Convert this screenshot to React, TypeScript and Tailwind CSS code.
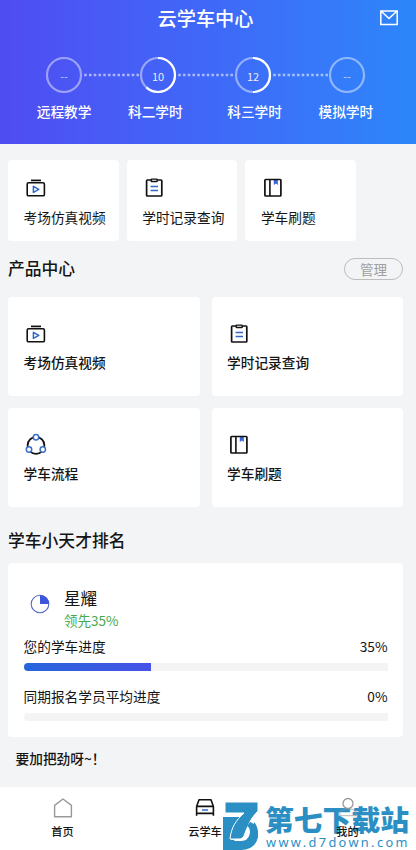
import type { ReactNode } from "react";

const steps = [
  { label: "远程教学", value: "--", progress: 0, pad: "pl-0" },
  { label: "科二学时", value: "10", progress: 62, pad: "pr-[6px]" },
  { label: "科三学时", value: "12", progress: 50, pad: "pl-[4px]" },
  { label: "模拟学时", value: "--", progress: 0, pad: "pr-[2px]" },
];

function VideoIcon() {
  return (
    <svg width="24" height="24" viewBox="0 0 24 24" fill="none">
      <path d="M7 4.4h10" stroke="#111" strokeWidth="1.7" />
      <rect x="3.2" y="6.8" width="17.2" height="13" rx="1.4" stroke="#111" strokeWidth="1.6" />
      <path d="M9.4 10.4v6l5.4-3z" stroke="#2f68c8" strokeWidth="1.5" strokeLinejoin="round" />
    </svg>
  );
}

function RecordIcon() {
  return (
    <svg width="24" height="24" viewBox="0 0 24 24" fill="none">
      <rect x="4.6" y="4" width="15.2" height="16" rx="0.8" stroke="#111" strokeWidth="1.7" />
      <rect x="9.2" y="3.1" width="6" height="2.4" rx="0.6" fill="#fff" stroke="#111" strokeWidth="1.4" />
      <path d="M8.6 10.4H16M8.6 14.6H16" stroke="#2f68c8" strokeWidth="1.5" />
    </svg>
  );
}

function BookIcon() {
  return (
    <svg width="24" height="24" viewBox="0 0 24 24" fill="none">
      <path d="M12.8 4h4v5l-2-1.5-2 1.5z" fill="#3a63d6" />
      <rect x="3.9" y="3.5" width="16" height="16.5" rx="0.8" stroke="#111" strokeWidth="1.7" />
      <path d="M8.9 3.5V20" stroke="#111" strokeWidth="1.6" />
    </svg>
  );
}

function FlowIcon() {
  return (
    <svg width="24" height="24" viewBox="0 0 24 24" fill="none">
      <circle cx="12" cy="12.4" r="8.4" stroke="#111" strokeWidth="1.8" />
      <g fill="#fff" stroke="#3a6fc9" strokeWidth="1.5">
        <circle cx="12" cy="4.2" r="2.7" />
        <circle cx="5" cy="16.5" r="2.7" />
        <circle cx="18.8" cy="16.5" r="2.7" />
      </g>
    </svg>
  );
}

function Ring({ value, progress }: { value: string; progress: number }) {
  return (
    <svg width="38" height="38" viewBox="0 0 38 38" fill="none" className="shrink-0">
      <circle cx="19" cy="19" r="17" stroke="#fff" strokeOpacity="0.45" strokeWidth="2.2" />
      {progress > 0 && (
        <circle
          cx="19"
          cy="19"
          r="17"
          stroke="#fff"
          strokeWidth="2.2"
          pathLength="100"
          strokeDasharray={`${progress} 100`}
          transform="rotate(-90 19 19)"
        />
      )}
      <text x="19" y="24.5" textAnchor="middle" fontSize="11" fill="#fff" fillOpacity={progress ? 0.9 : 0.7}>
        {value}
      </text>
    </svg>
  );
}

function Dots() {
  return (
    <svg width="56.3" height="4" viewBox="0 0 56.3 4" className="shrink-0">
      <path d="M1.2 2H56" stroke="#fff" strokeOpacity="0.55" strokeWidth="2.6" strokeDasharray="2.6 2.15" />
    </svg>
  );
}

function Card({ icon, label, className }: { icon: ReactNode; label: string; className: string }) {
  return (
    <div className={`flex flex-col rounded bg-white pl-[15.5px] ${className}`}>
      {icon}
      <span className="whitespace-nowrap text-[13.7px] leading-5">{label}</span>
    </div>
  );
}

function ProgressRow({ label, value }: { label: string; value: number }) {
  return (
    <div>
      <div className="flex justify-between text-[13.7px] leading-5">
        <span>{label}</span>
        <span>{value}%</span>
      </div>
      <div className="mt-[7px] h-2 overflow-hidden rounded-l-full bg-[#f4f4f4]">
        <div className="h-full bg-linear-to-r from-[#2465dc] to-[#4553e6]" style={{ width: `${value}%` }} />
      </div>
    </div>
  );
}

function Watermark() {
  return (
    <div className="absolute left-[223px] top-[15px] flex text-[#2b8fc4]">
      <svg width="36" height="49" viewBox="0 0 36 49" fill="none">
        <path d="M0 15h24c7 3 11 8 11 17 0 10-7 16-17 16H0z" fill="currentColor" />
        <path d="M23 22c3 2 4 5 4 8 0 6-4 9-9 9h-7z" fill="#fff" />
        <path d="M0 13.5h20L8 38l12-1 16-23z" fill="#fff" />
        <path d="M0 15h17L8 32v8H0z" fill="currentColor" />
        <path
          d="M2 0h33v9c-7 7-10 14-14 25-1 2-3 3-5 3H7c1-11 6-19 14-26H2z"
          fill="currentColor"
          stroke="#fff"
          strokeWidth="1"
        />
        <path d="M27 20c5 2 8 6 8 12 0 7-4 12-9 14l-2-9c2-2 3-4 3-7 0-3-1-5-3-6z" fill="currentColor" />
      </svg>
      <div className="ml-[6px] flex flex-col">
        <span className="whitespace-nowrap text-[28.8px] font-black leading-[33px]">第七下载站</span>
        <span className="whitespace-nowrap pl-px font-['Noto_Sans'] text-[12.8px] leading-[14px] tracking-[2.35px]">www.d7down.com</span>
      </div>
    </div>
  );
}

export default function App() {
  return (
    <div className="flex h-[850px] w-[416px] flex-col overflow-hidden bg-[#f3f4f6] font-['Noto_Sans_CJK_SC',sans-serif] text-[#151515]">
      <header className="flex h-36 shrink-0 flex-col bg-linear-to-r from-[#4f4cf2] via-[#3f68f8] to-[#2c86fa] text-white">
        <div className="grid h-9 grid-cols-[1fr_auto_1fr] items-center pr-[5px]">
          <span />
          <h1 className="text-[19.2px] font-medium leading-7">云学车中心</h1>
          <svg width="20" height="18" viewBox="0 0 20 18" fill="none" className="mr-3 justify-self-end">
            <path d="M1.8 2h16.4v13.4H1.8zM2.5 2.5l7.5 7 7.5-7" stroke="#fff" strokeWidth="1.5" />
          </svg>
        </div>
        <div className="mt-5 flex items-center pl-[45px]">
          {steps.map((step, i) => (
            <div key={step.label} className="flex items-center">
              {i > 0 && <Dots />}
              <Ring value={step.value} progress={step.progress} />
            </div>
          ))}
        </div>
        <div className="ml-[17px] mt-[6.5px] grid w-[377px] grid-cols-4 text-center text-[13.7px] font-medium leading-5">
          {steps.map((step) => (
            <span key={step.label} className={step.pad}>
              {step.label}
            </span>
          ))}
        </div>
      </header>

      <main className="flex flex-1 flex-col pl-2 pr-[13px]">
        <section className="mt-4 flex gap-2">
          <Card icon={<VideoIcon />} label="考场仿真视频" className="h-[81px] w-[110.7px] gap-[6.5px] pt-4" />
          <Card icon={<RecordIcon />} label="学时记录查询" className="h-[81px] w-[110.7px] gap-[6.5px] pt-4" />
          <Card icon={<BookIcon />} label="学车刷题" className="h-[81px] w-[110.7px] gap-[6.5px] pt-4" />
        </section>

        <div className="mt-[17px] flex h-[22px] items-center justify-between">
          <h2 className="-mt-[2px] text-[16.8px] font-medium leading-6">产品中心</h2>
          <button className="h-[22px] w-[59px] rounded-full border border-[#bdbdbd] text-[13.5px] leading-5 text-[#a0a0a0]">管理</button>
        </div>

        <section className="mt-[17px] grid grid-cols-2 gap-3 font-medium">
          <Card icon={<VideoIcon />} label="考场仿真视频" className="h-[99px] gap-[6px] pt-[25px]" />
          <Card icon={<RecordIcon />} label="学时记录查询" className="h-[99px] gap-[6px] pt-[25px]" />
          <Card icon={<FlowIcon />} label="学车流程" className="h-[99px] gap-[6px] pt-[25px]" />
          <Card icon={<BookIcon />} label="学车刷题" className="h-[99px] gap-[6px] pt-[25px]" />
        </section>

        <h2 className="mt-[21px] text-[16.8px] font-medium leading-6">学车小天才排名</h2>

        <section className="mt-[11px] h-[174px] rounded bg-white px-[15.5px] pt-[23px]">
          <div className="flex">
            <svg width="20" height="20" viewBox="0 0 20 20" fill="none" className="ml-[6px] mt-2">
              <circle cx="10" cy="10" r="8.8" stroke="#5669bd" strokeWidth="1.1" />
              <path d="M10 10V.9a9.1 9.1 0 0 1 9.1 9.1z" fill="#3d57dc" />
            </svg>
            <div className="ml-[14.5px]">
              <div className="text-[16.6px] leading-6">星耀</div>
              <div className="text-[13.5px] leading-5 text-[#48a94b]">领先35%</div>
            </div>
          </div>
          <div className="mt-[6px] flex flex-col gap-[15px]">
            <ProgressRow label="您的学车进度" value={35} />
            <ProgressRow label="同期报名学员平均进度" value={0} />
          </div>
        </section>

        <p className="ml-[7.5px] mt-[11px] text-[13.7px] font-medium leading-5">要加把劲呀~！</p>
      </main>

      <nav className="relative h-[63px] shrink-0 overflow-hidden bg-white">
        <Watermark />
        <div className="relative flex w-full text-[11.2px] font-medium leading-4">
          <div className="flex w-[125px] flex-col items-center pt-[10px]">
            <svg width="22" height="22" viewBox="0 0 22 22" fill="none">
              <path d="M2.6 8.4 11 2l8.4 6.4v11.4H2.6z" stroke="#999" strokeWidth="1.4" strokeLinejoin="round" />
            </svg>
            <span className="mt-1">首页</span>
          </div>
          <div className="flex w-[160px] flex-col items-center pt-[10px]">
            <svg width="22" height="22" viewBox="0 0 22 22" fill="none">
              <path d="M2.6 9.4 5 2.8h12l2.4 6.6v9.4M2.6 9.4v9.4M2.6 9.4h16.8M2.6 16.4h16.8" stroke="#111" strokeWidth="1.6" strokeLinejoin="round" />
              <path d="M8 13h6" stroke="#2f68c8" strokeWidth="1.5" />
            </svg>
            <span className="mt-1">云学车</span>
          </div>
          <div className="flex w-[125px] flex-col items-center pt-[10px]">
            <svg width="22" height="22" viewBox="0 0 22 22" fill="none">
              <circle cx="11" cy="6.5" r="5" stroke="#999" strokeWidth="1.3" />
              <path d="M2.6 18.6c0-4.4 2.6-7 8.4-7s8.4 2.6 8.4 7z" stroke="#999" strokeOpacity="0.6" strokeWidth="1.2" />
            </svg>
            <span className="mt-1">我的</span>
          </div>
        </div>
      </nav>
    </div>
  );
}
